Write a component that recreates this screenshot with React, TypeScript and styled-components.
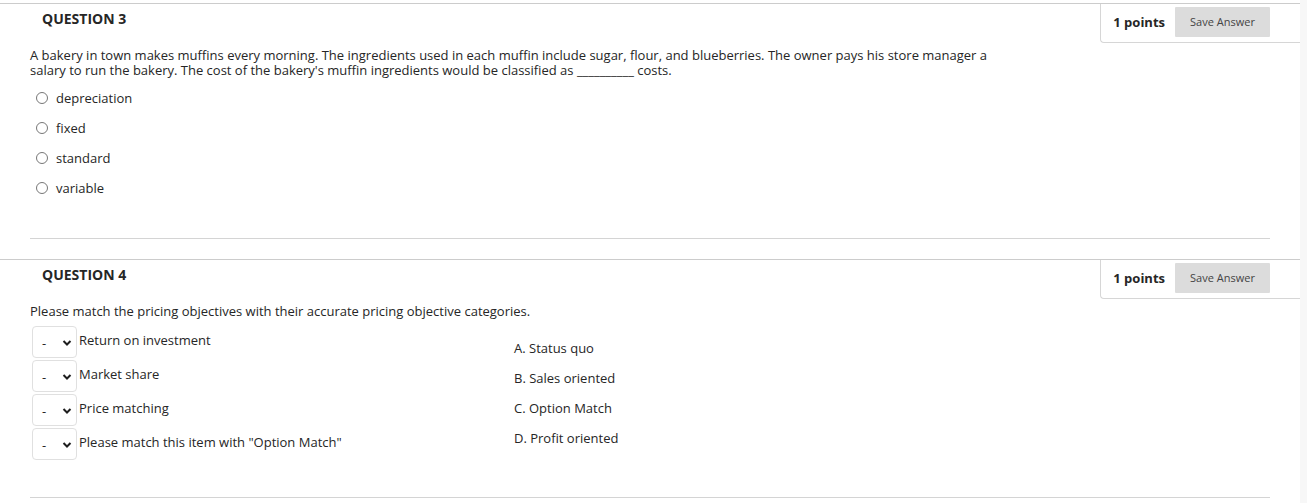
import React from "react"
import styled, { createGlobalStyle } from "styled-components"

const GlobalStyle = createGlobalStyle`
	html, body {
		margin: 0;
		padding: 0;
		background: #ffffff;
	}
	body {
		font-family: "Open Sans", "Liberation Sans", sans-serif;
		color: #262626;
	}
`

const Page = styled.div`
	display: flex;
	width: 1307px;
	height: 503px;
	overflow: hidden;
`

const Main = styled.main`
	width: 1300px;
	padding-top: 3px;
`

const Gutter = styled.div`
	width: 7px;
	background: #f7f7f7;
`

const Question = styled.section<{ $gap?: number }>`
	margin-top: ${(p) => p.$gap ?? 0}px;
	border-top: 1px solid #cccccc;
`

const HeaderRow = styled.div`
	display: flex;
	justify-content: space-between;
	align-items: flex-start;
	height: 40px;
`

const Title = styled.h3`
	margin: 0;
	padding: 6px 0 0 42px;
	font-size: 14px;
	line-height: 18px;
	font-weight: 700;
	color: #262626;
`

const PointsBox = styled.div`
	display: flex;
	align-items: center;
	gap: 10px;
	height: 39px;
	padding: 0 30px 3px 12px;
	border-left: 1px solid #d6d6d6;
	border-bottom: 1px solid #d6d6d6;
	border-bottom-left-radius: 4px;
	box-sizing: border-box;
`

const Points = styled.span`
	font-size: 13px;
	font-weight: 700;
	color: #262626;
`

const SaveButton = styled.button`
	width: 95px;
	height: 30px;
	border: none;
	border-radius: 1px;
	background: #dcdcdc;
	color: #444444;
	font-family: "Open Sans", "Liberation Sans", sans-serif;
	font-size: 11px;
	padding: 0;
`

const Body = styled.div<{ $bottom: number }>`
	margin: 0 30px;
	padding: 4px 0 ${(p) => p.$bottom}px;
	border-bottom: 1px solid #d4d4d4;
`

const Prompt = styled.p`
	margin: 0;
	max-width: 975px;
	font-size: 13px;
	line-height: 15px;
`

const Choices = styled.ul`
	list-style: none;
	margin: 5px 0 0;
	padding: 0 0 0 6px;
`

const Choice = styled.li`
	display: flex;
	align-items: center;
	gap: 8px;
	height: 30px;
	font-size: 13px;
`

const Radio = styled.span`
	width: 12px;
	height: 12px;
	margin-top: -1px;
	border: 1px solid #777777;
	border-radius: 50%;
	box-sizing: border-box;
	background: #ffffff;
`

const MatchGrid = styled.div`
	display: grid;
	grid-template-columns: 484px auto;
	margin-top: 7px;
`

const Pairs = styled.div`
	display: flex;
	flex-direction: column;
	gap: 2px;
`

const PairRow = styled.div`
	display: flex;
	align-items: flex-start;
	gap: 2px;
	padding-left: 2px;
`

const Select = styled.div`
	display: flex;
	align-items: center;
	justify-content: space-between;
	width: 45px;
	height: 32px;
	padding: 2px 4px 0 9px;
	border: 1px solid #e0e0e0;
	border-radius: 4px;
	box-sizing: border-box;
	font-size: 13px;
`

const Label = styled.span`
	padding-top: 5px;
	font-size: 13px;
	line-height: 18px;
`

const Answers = styled.ol`
	list-style: none;
	margin: 0;
	padding: 7px 0 0;
`

const Answer = styled.li`
	height: 30px;
	line-height: 30px;
	font-size: 13px;
`

const Chevron = () => (
	<svg width="10" height="8" viewBox="0 0 10 8">
		<path d="M1.5 2 L5 5.5 L8.5 2" fill="none" stroke="#1e1e1e" strokeWidth="2" />
	</svg>
)

const PointsHeader = ({ title }: { title: string }) => (
	<HeaderRow>
		<Title>{title}</Title>
		<PointsBox>
			<Points>1 points</Points>
			<SaveButton>Save Answer</SaveButton>
		</PointsBox>
	</HeaderRow>
)

const choices = ["depreciation", "fixed", "standard", "variable"]
const pairs = [
	"Return on investment",
	"Market share",
	"Price matching",
	'Please match this item with "Option Match"',
]
const answers = ["A. Status quo", "B. Sales oriented", "C. Option Match", "D. Profit oriented"]

const App = () => {
	return (
		<>
			<GlobalStyle />
			<Page>
				<Main>
					<Question>
						<PointsHeader title="QUESTION 3" />
						<Body $bottom={35}>
							<Prompt>
								A bakery in town makes muffins every morning. The ingredients used in each muffin include
								sugar, flour, and blueberries. The owner pays his store manager a salary to run the bakery.
								The cost of the bakery's muffin ingredients would be classified as __________ costs.
							</Prompt>
							<Choices>
								{choices.map((c) => (
									<Choice key={c}>
										<Radio />
										{c}
									</Choice>
								))}
							</Choices>
						</Body>
					</Question>
					<Question $gap={20}>
						<PointsHeader title="QUESTION 4" />
						<Body $bottom={37}>
							<Prompt>Please match the pricing objectives with their accurate pricing objective categories.</Prompt>
							<MatchGrid>
								<Pairs>
									{pairs.map((p) => (
										<PairRow key={p}>
											<Select>
												-
												<Chevron />
											</Select>
											<Label>{p}</Label>
										</PairRow>
									))}
								</Pairs>
								<Answers>
									{answers.map((a) => (
										<Answer key={a}>{a}</Answer>
									))}
								</Answers>
							</MatchGrid>
						</Body>
					</Question>
				</Main>
				<Gutter />
			</Page>
		</>
	)
}

export default App
